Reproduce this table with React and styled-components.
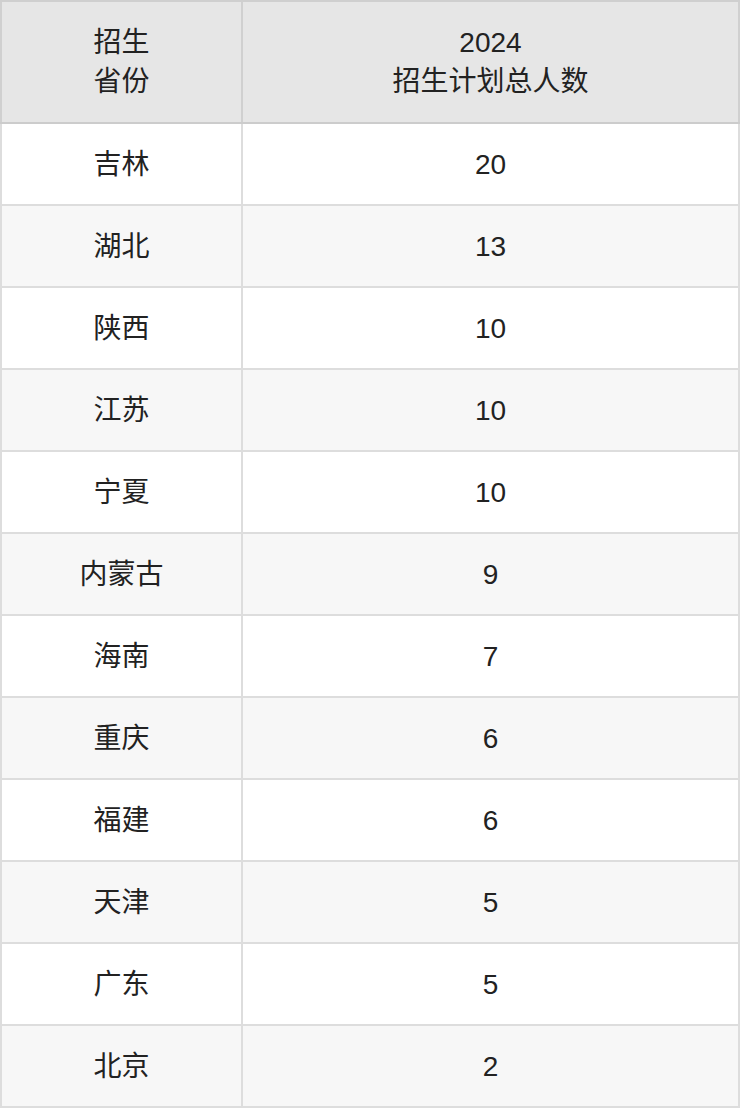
import React from "react";
import styled, { createGlobalStyle } from "styled-components";

const Global = createGlobalStyle`
  html, body { margin: 0; padding: 0; background: #fff; }
  body { font-family: "Liberation Sans", "Noto Sans CJK SC", sans-serif; color: #222; }
`;

const Table = styled.div`
  width: 740px;
  display: flex;
  flex-direction: column;
`;

const Row = styled.div`
  display: grid;
  grid-template-columns: 243px 497px;
  height: ${(p) => (p.$head ? "124px" : "82px")};
  box-sizing: border-box;
  background: ${(p) => (p.$head ? "#e6e6e6" : p.$alt ? "#f7f7f7" : "#ffffff")};
  border-top: ${(p) => (p.$head ? "2px solid #cfcfcf" : "none")};
  border-bottom: 2px solid ${(p) => (p.$head ? "#cccccc" : "#dddddd")};
`;

const Cell = styled.div`
  box-sizing: border-box;
  display: flex;
  align-items: center;
  justify-content: center;
  text-align: center;
  font-size: 28px;
  line-height: 39px;
  border-right: 2px solid ${(p) => (p.$head ? "#d0d0d0" : "#dddddd")};
  border-left: ${(p) => (p.$first ? `2px solid ${p.$head ? "#d0d0d0" : "#dddddd"}` : "none")};
`;

const data = [
  ["吉林", "20"],
  ["湖北", "13"],
  ["陕西", "10"],
  ["江苏", "10"],
  ["宁夏", "10"],
  ["内蒙古", "9"],
  ["海南", "7"],
  ["重庆", "6"],
  ["福建", "6"],
  ["天津", "5"],
  ["广东", "5"],
  ["北京", "2"],
];

export default function App() {
  return (
    <>
      <Global />
      <Table>
        <Row $head>
          <Cell $head $first>
            招生
            <br />
            省份
          </Cell>
          <Cell $head>
            2024
            <br />
            招生计划总人数
          </Cell>
        </Row>
        {data.map(([p, n], i) => (
          <Row key={p} $alt={i % 2 === 1}>
            <Cell $first>{p}</Cell>
            <Cell>{n}</Cell>
          </Row>
        ))}
      </Table>
    </>
  );
}
